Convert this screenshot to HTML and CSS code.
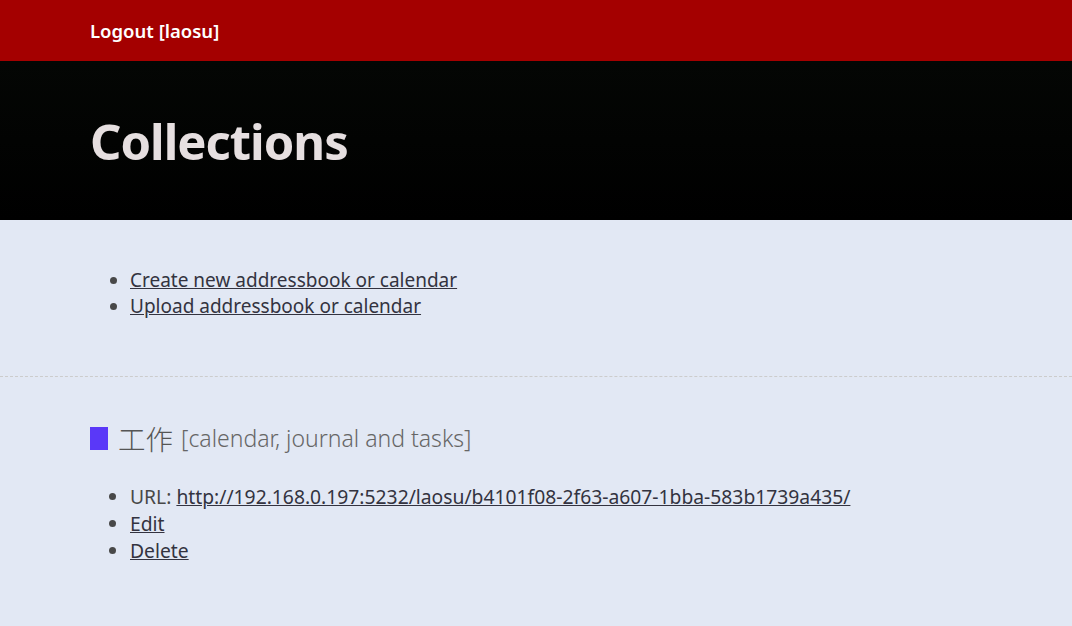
FILE: index.html
```html
<!DOCTYPE html>
<html>
<head>
<meta charset="utf-8">
<link rel="stylesheet" href="styles.css">
</head>
<body>
<nav class="topbar">
  <a class="logout" href="#">Logout [laosu]</a>
</nav>
<header class="hero">
  <h1>Collections</h1>
</header>
<main>
  <section class="actions">
    <ul>
      <li><a href="#">Create new addressbook or calendar</a></li>
      <li><a href="#">Upload addressbook or calendar</a></li>
    </ul>
  </section>
  <section class="collection">
    <h3><span class="swatch"></span><span class="name">工作</span> <span class="kind">[calendar, journal and tasks]</span></h3>
    <ul class="details">
      <li>URL: <a href="#">http://192.168.0.197:5232/laosu/b4101f08-2f63-a607-1bba-583b1739a435/</a></li>
      <li><a href="#">Edit</a></li>
      <li><a href="#">Delete</a></li>
    </ul>
  </section>
</main>
</body>
</html>
```
FILE: styles.css
```css
html, body {
  margin: 0;
  padding: 0;
  height: 100%;
}
body {
  background: #e2e8f4;
  font-family: "Noto Sans", "Noto Sans CJK SC", sans-serif;
  font-size: 19px;
  color: #484848;
}
.topbar {
  background: #a40000;
  height: 61px;
  display: flex;
  align-items: center;
  padding: 0 90px;
}
.logout {
  color: #ffffff;
  text-decoration: none;
  font-size: 18.5px;
  font-weight: 600;
}
.hero {
  background: linear-gradient(#040604, #000000);
  height: 159px;
  display: flex;
  align-items: center;
  padding: 0 90px;
}
.hero h1 {
  margin: 0;
  color: #e6dfe0;
  font-size: 49px;
  letter-spacing: -1px;
  font-weight: 700;
}
.actions {
  padding: 47px 0 57px 0;
  border-bottom: 1px dashed #cccccc;
}
ul {
  margin: 0;
  padding-left: 130px;
}
li {
  line-height: 26px;
}
.details li {
  line-height: 27px;
}
.details {
  font-size: 19.3px;
}
a {
  color: #333340;
}
.collection {
  padding-top: 41px;
}
.collection h3 {
  margin: 0 0 25px 90px;
  display: flex;
  align-items: center;
  font-weight: 400;
  color: #555;
}
.swatch {
  width: 18px;
  height: 23px;
  background: #5a38f8;
  margin-right: 10px;
}
.name {
  font-size: 27.5px;
  font-weight: 300;
  margin-right: 8px;
}
.kind {
  font-size: 23px;
  font-weight: 300;
  color: #666;
}
```
